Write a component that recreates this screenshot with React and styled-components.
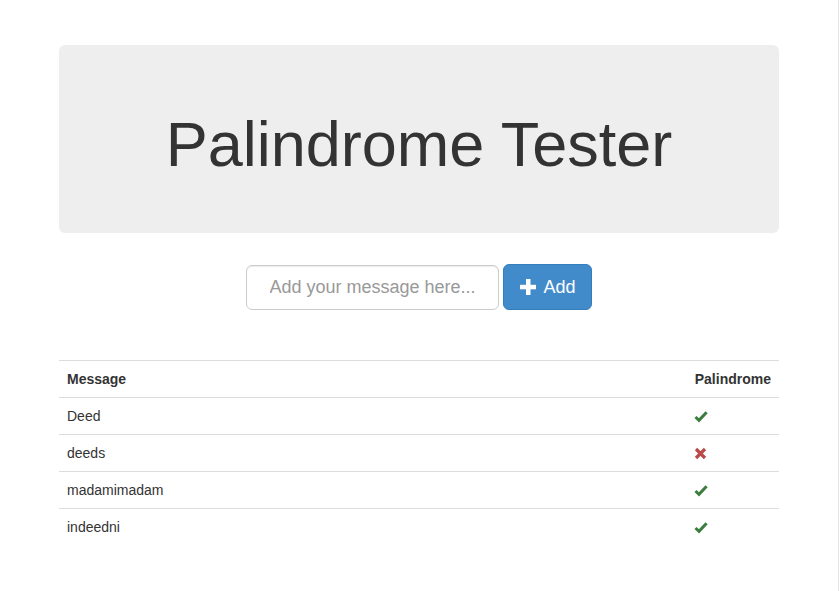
import React from "react";
import styled, { createGlobalStyle } from "styled-components";

const Global = createGlobalStyle`
  html, body { margin: 0; padding: 0; background: #fff; }
  body {
    font-family: "Liberation Sans", Arial, Helvetica, sans-serif;
    font-size: 14px;
    line-height: 1.428571;
    color: #333;
  }
`;

const Page = styled.div`
  min-height: 100vh;
  box-sizing: border-box;
  border-right: 1px solid #e4e4e4;
  padding-top: 45px;
`;

const Container = styled.div`
  width: 720px;
  margin: 0 auto;
`;

const Jumbotron = styled.div`
  background: #eeeeee;
  border-radius: 6px;
  height: 188px;
  box-sizing: border-box;
  padding-top: 65px;
  text-align: center;
`;

const Title = styled.h1`
  margin: 0;
  font-size: 63px;
  line-height: 69px;
  font-weight: 400;
  color: #333;
`;

const Form = styled.form`
  display: flex;
  justify-content: center;
  align-items: center;
  gap: 4px;
  margin-top: 31px;
  padding-right: 1px;
`;

const Input = styled.input`
  box-sizing: border-box;
  width: 253px;
  height: 45px;
  padding: 10px 16px 10px 23px;
  font-family: inherit;
  font-size: 18px;
  color: #555;
  border: 1px solid #ccc;
  border-radius: 6px;
  outline: none;
  box-shadow: inset 0 1px 1px rgba(0, 0, 0, 0.075);
  &::placeholder { color: #999; }
`;

const Button = styled.button`
  box-sizing: border-box;
  height: 46px;
  width: 89px;
  display: flex;
  align-items: center;
  justify-content: center;
  gap: 7px;
  padding: 0 0 0 2px;
  font-family: inherit;
  font-size: 18px;
  color: #fff;
  background: #428bca;
  border: 1px solid #357ebd;
  border-radius: 6px;
  cursor: pointer;
`;

const Table = styled.table`
  width: 100%;
  margin-top: 50px;
  border-collapse: collapse;
  border-spacing: 0;
`;

const Cell = styled.td`
  padding: 8px;
  height: 20px;
  line-height: 20px;
  text-align: left;
  border-top: 1px solid #ddd;
  vertical-align: top;
  width: ${(p) => (p.$narrow ? "1%" : "auto")};
  white-space: ${(p) => (p.$narrow ? "nowrap" : "normal")};
  font-weight: ${(p) => (p.$head ? 700 : 400)};
`;

const IconWrap = styled.div`
  display: flex;
  align-items: center;
  height: 20px;
  margin-left: -1px;
`;

const PlusIcon = () => (
  <svg width="16" height="16" viewBox="0 0 16 16">
    <rect x="6" y="0" width="4.5" height="16" fill="#fff" />
    <rect x="0" y="5.8" width="16" height="4.5" fill="#fff" />
  </svg>
);

const CheckIcon = () => (
  <svg width="14" height="13" viewBox="0 0 14 13">
    <path d="M1.5 7 L5 10.3 L12.6 2.2" fill="none" stroke="#3c7d3e" strokeWidth="3" />
  </svg>
);

const CrossIcon = () => (
  <svg width="13" height="13" viewBox="0 0 13 13">
    <path d="M2 2 L11 11 M11 2 L2 11" fill="none" stroke="#b94a48" strokeWidth="3.2" />
  </svg>
);

const rows = [
  { msg: "Deed", ok: true },
  { msg: "deeds", ok: false },
  { msg: "madamimadam", ok: true },
  { msg: "indeedni", ok: true },
];

export default function App() {
  return (
    <Page>
      <Global />
      <Container>
        <Jumbotron>
          <Title>Palindrome Tester</Title>
        </Jumbotron>
        <Form onSubmit={(e) => e.preventDefault()}>
          <Input placeholder="Add your message here..." />
          <Button type="submit">
            <PlusIcon />
            Add
          </Button>
        </Form>
        <Table>
          <thead>
            <tr>
              <Cell as="th" $head>Message</Cell>
              <Cell as="th" $head $narrow>Palindrome</Cell>
            </tr>
          </thead>
          <tbody>
            {rows.map((r) => (
              <tr key={r.msg}>
                <Cell>{r.msg}</Cell>
                <Cell $narrow>
                  <IconWrap>{r.ok ? <CheckIcon /> : <CrossIcon />}</IconWrap>
                </Cell>
              </tr>
            ))}
          </tbody>
        </Table>
      </Container>
    </Page>
  );
}
